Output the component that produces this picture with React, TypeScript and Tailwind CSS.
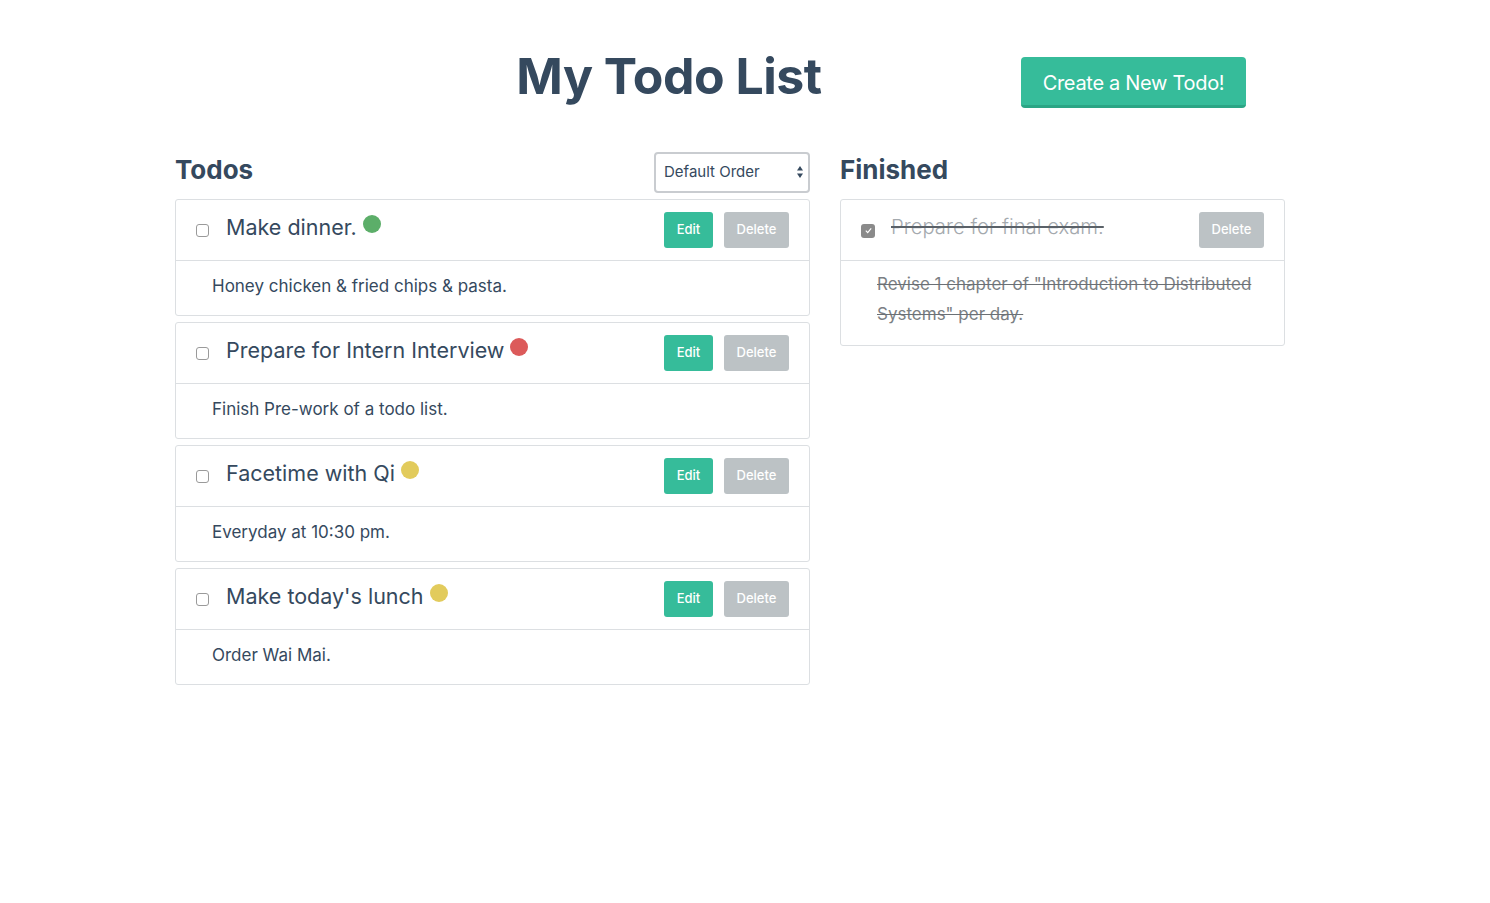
import React from "react";

type Todo = { title: string; body: string; color: string };

const todos: Todo[] = [
  { title: "Make dinner.", body: "Honey chicken & fried chips & pasta.", color: "bg-[#5cae69]" },
  { title: "Prepare for Intern Interview", body: "Finish Pre-work of a todo list.", color: "bg-[#dc5a5a]" },
  { title: "Facetime with Qi", body: "Everyday at 10:30 pm.", color: "bg-[#e2cb5c]" },
  { title: "Make today's lunch", body: "Order Wai Mai.", color: "bg-[#e2cb5c]" },
];

function Box({ checked }: { checked?: boolean }) {
  if (checked) {
    return (
      <span className="block w-[14px] h-[14px] rounded-[3px] bg-[#8a8a8a] flex items-center justify-center shrink-0">
        <svg width="9" height="9" viewBox="0 0 10 10">
          <path d="M2 5.2 L4.1 7.3 L8 2.6" stroke="white" strokeWidth="1.3" fill="none" />
        </svg>
      </span>
    );
  }
  return <span className="block w-[13px] h-[13px] rounded-[3px] border border-[#9a9a9a] bg-white shrink-0" />;
}

function TodoCard({ t }: { t: Todo }) {
  return (
    <div className="border border-[#dcdfe2] rounded-[3px] bg-white">
      <div className="h-[61px] flex items-center pl-[20px] pr-[20px] border-b border-[#dcdfe2]">
        <span className="block mt-[1px] shrink-0"><Box /></span>
        <span className="ml-[17px] text-[21.5px] text-[#35495e] mb-[6px]">{t.title}</span>
        <span className={`block ml-[6px] w-[18px] h-[18px] rounded-full ${t.color} mb-[12px]`} />
        <div className="ml-auto flex gap-[11px]">
          <button className="w-[49px] h-[36px] rounded-[3px] bg-[#36bc9a] text-white text-[13px] font-medium">Edit</button>
          <button className="w-[65px] h-[36px] rounded-[3px] bg-[#bcc2c5] text-white text-[13px] font-medium">Delete</button>
        </div>
      </div>
      <div className="h-[54px] flex items-center pl-[36px] pb-[3px] text-[17px] text-[#35495e]">{t.body}</div>
    </div>
  );
}

export default function App() {
  return (
    <div className="min-h-[903px] bg-white text-[#35495e]" style={{ fontFamily: "Inter, 'Noto Sans', sans-serif" }}>
      <div className="relative h-[151px] flex justify-center">
        <h1 className="text-[50px] font-bold tracking-[-0.5px] mt-[51px] leading-none ml-[-152px]">My Todo List</h1>
        <button className="absolute left-[1021px] top-[57px] w-[225px] h-[51px] pt-[3px] rounded-[4px] bg-[#36bc9a] border-b-[3px] border-[#2ba585] text-white text-[20px] tracking-[-0.3px]">
          Create a New Todo!
        </button>
      </div>
      <div className="flex pl-[175px] gap-[30px]">
        <div className="w-[635px]">
          <div className="flex items-center justify-between h-[48px]">
            <h2 className="text-[26px] font-bold mt-[-11px]">Todos</h2>
            <div className="w-[156px] h-[41px] border-2 border-[#c9ccd0] rounded-[4px] flex items-center pl-[8px] pr-[4px] mt-[-6px]">
              <span className="text-[15px] text-[#35495e]">Default Order</span>
              <svg className="ml-auto" width="8" height="14" viewBox="0 0 8 14">
                <path d="M4 1 L7 5.5 L1 5.5 Z" fill="#35495e" />
                <path d="M4 13 L7 8.5 L1 8.5 Z" fill="#35495e" />
              </svg>
            </div>
          </div>
          <div className="flex flex-col gap-[6px]">
            {todos.map((t) => (
              <TodoCard key={t.title} t={t} />
            ))}
          </div>
        </div>
        <div className="w-[445px]">
          <div className="flex items-center h-[48px]">
            <h2 className="text-[26px] font-bold mt-[-11px]">Finished</h2>
          </div>
          <div className="border border-[#dcdfe2] rounded-[3px] bg-white">
            <div className="h-[61px] flex items-center pl-[20px] pr-[20px] border-b border-[#dcdfe2]">
              <span className="block mt-[1px] shrink-0"><Box checked /></span>
              <span className="ml-[16px] text-[20.3px] text-[#a4a9ae] font-light line-through decoration-[#5a6168] mb-[6px]">Prepare for final exam.</span>
              <button className="ml-auto w-[65px] h-[36px] rounded-[3px] bg-[#bcc2c5] text-white text-[13px] font-medium">Delete</button>
            </div>
            <div className="pl-[36px] pr-[20px] pt-[8px] pb-[16px] text-[17px] leading-[30px] text-[#7b7f84] line-through decoration-[#6b7075]">
              Revise 1 chapter of "Introduction to Distributed Systems" per day.
            </div>
          </div>
        </div>
      </div>
    </div>
  );
}
